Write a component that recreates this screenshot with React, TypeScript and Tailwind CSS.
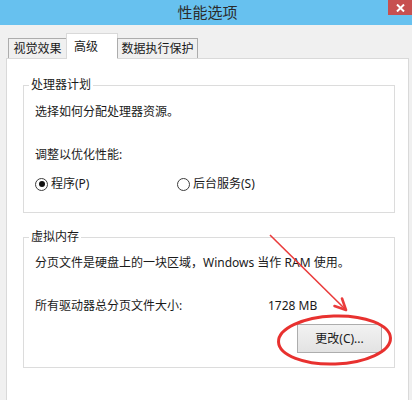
import React from 'react';

const FONT = { fontFamily: '"Noto Sans", "Noto Sans CJK SC", sans-serif' };

function Radio({ checked, label, className = '' }: { checked?: boolean; label: string; className?: string }) {
    return (
        <div className={`flex items-center ${className}`}>
            <span className="w-[13px] h-[13px] rounded-full border border-[#3c3c3c] bg-white flex items-center justify-center">
                {checked && <span className="w-[6px] h-[6px] rounded-full bg-[#111]" />}
            </span>
            <span className="ml-[3px]">{label}</span>
        </div>
    );
}

function GroupBox({ title, className = '', children }: { title: string; className?: string; children: React.ReactNode }) {
    return (
        <fieldset className={`w-[372px] border border-[#dcdcdc] ${className}`}>
            <legend className="ml-[5px] px-[2px] leading-[16px]">{title}</legend>
            {children}
        </fieldset>
    );
}

export default function App() {
    return (
        <div className="relative w-[412px] h-[400px] overflow-hidden bg-[#f0f0f0] flex flex-col text-[12px] text-[#1a1a1a]" style={FONT}>
            {/* title bar */}
            <div className="relative h-[25px] bg-[#67c1ef] flex items-center justify-center">
                <span className="text-[15px] leading-[20px] text-[#2b2b2b] ml-[3px] mt-[-1px]">性能选项</span>
                <div className="absolute right-0 top-0 w-[24px] h-[15px] bg-[#c75050] flex items-center justify-center">
                    <svg width="9" height="8" viewBox="0 0 9 8">
                        <path d="M1 0.5 L8 7.5 M8 0.5 L1 7.5" stroke="#fff" strokeWidth="2" />
                    </svg>
                </div>
            </div>

            {/* tabs */}
            <div className="relative z-10 h-[34px] -mb-px flex items-end pl-[8px] leading-[16px]">
                <div className="mb-px w-[59px] h-[20px] border border-b-0 border-[#acacac] bg-[#f0f0f0] flex items-center justify-center">
                    视觉效果
                </div>
                <div className="-ml-px w-[52px] h-[26px] border border-b-0 border-[#d9d9d9] bg-white flex items-start pt-[5px] pl-[7px]">
                    高级
                </div>
                <div className="-ml-px mb-px w-[81px] h-[20px] border border-b-0 border-[#acacac] bg-[#f0f0f0] flex items-center justify-center">
                    数据执行保护
                </div>
            </div>

            {/* panel */}
            <div className="ml-[6px] w-[403px] flex-1 bg-white border border-b-0 border-[#d9d9d9] pl-[16px] leading-[16px]">
                <GroupBox title="处理器计划" className="mt-[18px]">
                    <div className="pl-[11px] pb-[20px]">
                        <p className="mt-[11px]">选择如何分配处理器资源。</p>
                        <p className="mt-[27px]">调整以优化性能:</p>
                        <div className="mt-[13px] flex items-center h-[16px]">
                            <Radio checked label="程序(P)" className="w-[142px]" />
                            <Radio label="后台服务(S)" />
                        </div>
                    </div>
                </GroupBox>

                <GroupBox title="虚拟内存" className="mt-[16px]">
                    <div className="pl-[11px] pb-[14px] flex flex-col">
                        <p className="mt-[10px]">分页文件是硬盘上的一块区域，Windows 当作 RAM 使用。</p>
                        <div className="mt-[27px] flex">
                            <span className="w-[233px]">所有驱动器总分页文件大小:</span>
                            <span>1728 MB</span>
                        </div>
                        <button className="self-end mr-[12px] mt-[10px] w-[85px] h-[29px] border border-[#adadad] bg-gradient-to-b from-[#f2f2f2] to-[#e3e3e3] flex items-center justify-center">
                            更改(C)...
                        </button>
                    </div>
                </GroupBox>
            </div>

            {/* red annotation */}
            <svg className="absolute inset-0 pointer-events-none" width="412" height="400" viewBox="0 0 412 400">
                <line x1="270" y1="235" x2="345" y2="309" stroke="#ea3b3b" strokeWidth="1.6" />
                <path d="M334.5 306 L346 310 L342 298.5" fill="none" stroke="#ea3b3b" strokeWidth="2.6" strokeLinecap="round" strokeLinejoin="round" />
                <ellipse cx="334.5" cy="340" rx="56" ry="24" fill="none" stroke="#e8312f" strokeWidth="3" transform="rotate(-2 334.5 340)" />
            </svg>
        </div>
    );
}
